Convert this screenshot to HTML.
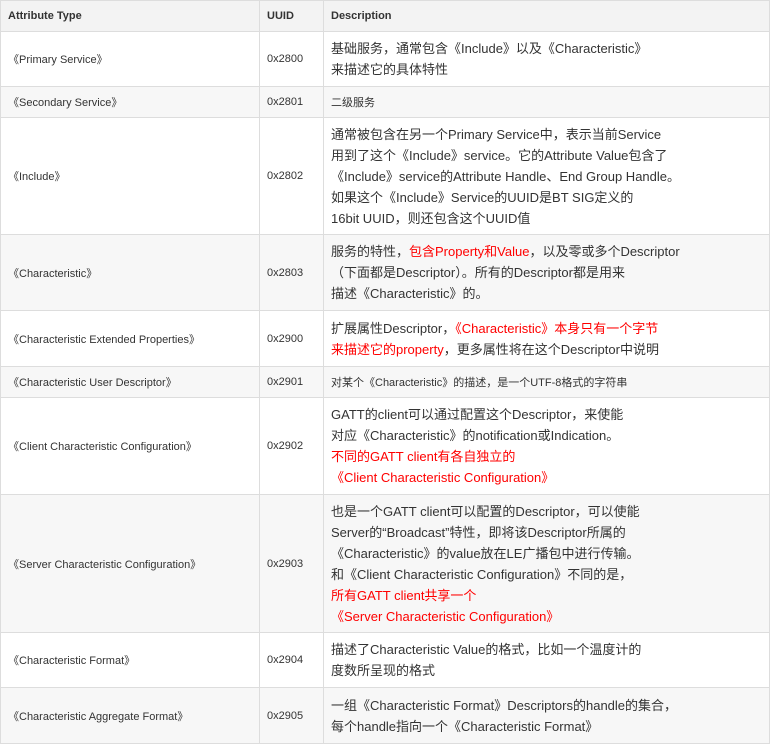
<!DOCTYPE html>
<html><head><meta charset="utf-8"><style>
body{margin:0;background:#fff;font-family:"Liberation Sans","Noto Sans CJK SC",sans-serif;color:#333}
table{border-collapse:collapse;width:770px;table-layout:fixed}
td,th{border:1px solid #ddd;padding:0 7px;vertical-align:middle;text-align:left;font-size:11px}
th{background:#f3f3f3;font-weight:bold;height:30px}
tr:nth-child(odd) td{background:#f7f7f7}
td.d{font-size:13px;line-height:21px}
.r{color:#f00}
</style></head><body>
<table>
<colgroup><col style="width:259px"><col style="width:64px"><col></colgroup>
<tr><th>Attribute Type</th><th>UUID</th><th>Description</th></tr>
<tr style="height:55px"><td>《Primary Service》</td><td>0x2800</td><td class="d">基础服务，通常包含《Include》以及《Characteristic》<br>来描述它的具体特性</td></tr>
<tr style="height:31px"><td>《Secondary Service》</td><td>0x2801</td><td>二级服务</td></tr>
<tr style="height:117px"><td>《Include》</td><td>0x2802</td><td class="d">通常被包含在另一个Primary Service中，表示当前Service<br>用到了这个《Include》service。它的Attribute Value包含了<br>《Include》service的Attribute Handle、End Group Handle。<br>如果这个《Include》Service的UUID是BT SIG定义的<br>16bit UUID，则还包含这个UUID值</td></tr>
<tr style="height:76px"><td>《Characteristic》</td><td>0x2803</td><td class="d">服务的特性，<span class="r">包含Property和Value</span>，以及零或多个Descriptor<br>（下面都是Descriptor）。所有的Descriptor都是用来<br>描述《Characteristic》的。</td></tr>
<tr style="height:56px"><td>《Characteristic Extended Properties》</td><td>0x2900</td><td class="d">扩展属性Descriptor，<span class="r">《Characteristic》本身只有一个字节<br>来描述它的property</span>，更多属性将在这个Descriptor中说明</td></tr>
<tr style="height:31px"><td>《Characteristic User Descriptor》</td><td>0x2901</td><td>对某个《Characteristic》的描述，是一个UTF-8格式的字符串</td></tr>
<tr style="height:97px"><td>《Client Characteristic Configuration》</td><td>0x2902</td><td class="d">GATT的client可以通过配置这个Descriptor，来使能<br>对应《Characteristic》的notification或Indication。<br><span class="r">不同的GATT client有各自独立的<br>《Client Characteristic Configuration》</span></td></tr>
<tr style="height:138px"><td>《Server Characteristic Configuration》</td><td>0x2903</td><td class="d">也是一个GATT client可以配置的Descriptor，可以使能<br>Server的“Broadcast”特性，即将该Descriptor所属的<br>《Characteristic》的value放在LE广播包中进行传输。<br>和《Client Characteristic Configuration》不同的是，<br><span class="r">所有GATT client共享一个<br>《Server Characteristic Configuration》</span></td></tr>
<tr style="height:55px"><td>《Characteristic Format》</td><td>0x2904</td><td class="d">描述了Characteristic Value的格式，比如一个温度计的<br>度数所呈现的格式</td></tr>
<tr style="height:56px"><td>《Characteristic Aggregate Format》</td><td>0x2905</td><td class="d">一组《Characteristic Format》Descriptors的handle的集合，<br>每个handle指向一个《Characteristic Format》</td></tr>
</table>
</body></html>
